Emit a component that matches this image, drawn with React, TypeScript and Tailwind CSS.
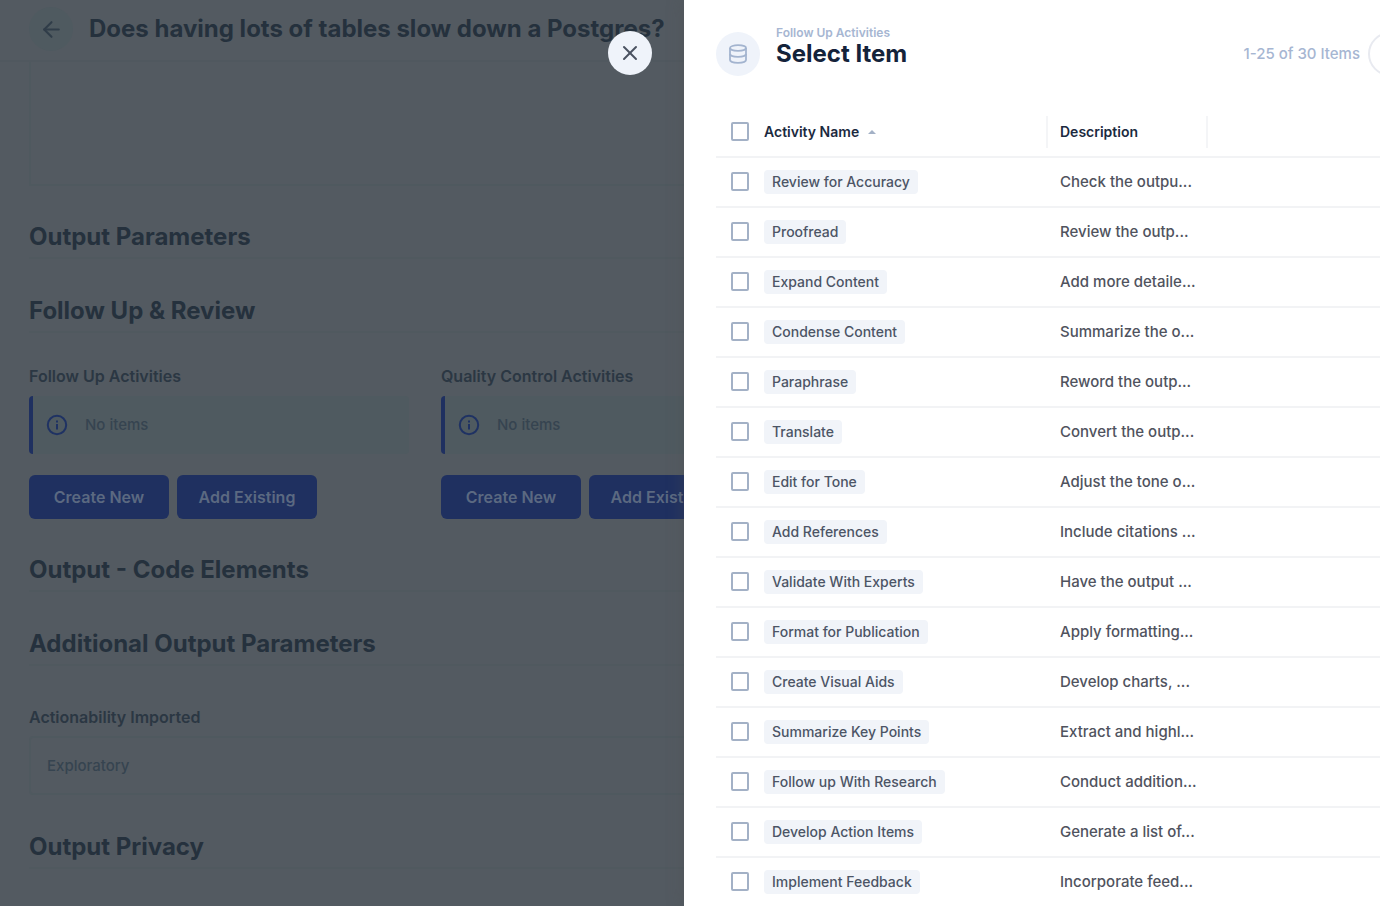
import { ArrowLeft, X } from "lucide-react";
import type { ReactNode } from "react";

const rows: [string, string][] = [
  ["Review for Accuracy", "Check the outpu..."],
  ["Proofread", "Review the outp..."],
  ["Expand Content", "Add more detaile..."],
  ["Condense Content", "Summarize the o..."],
  ["Paraphrase", "Reword the outp..."],
  ["Translate", "Convert the outp..."],
  ["Edit for Tone", "Adjust the tone o..."],
  ["Add References", "Include citations ..."],
  ["Validate With Experts", "Have the output ..."],
  ["Format for Publication", "Apply formatting..."],
  ["Create Visual Aids", "Develop charts, ..."],
  ["Summarize Key Points", "Extract and highl..."],
  ["Follow up With Research", "Conduct addition..."],
  ["Develop Action Items", "Generate a list of..."],
  ["Implement Feedback", "Incorporate feed..."],
];

function DatabaseIcon() {
  return (
    <svg width="20" height="20" viewBox="0 0 20 20" fill="none" stroke="#a3b4cf" strokeWidth="1.8" aria-hidden="true">
      <ellipse cx="10" cy="4" rx="8" ry="2.8" />
      <path d="M2 4v12c0 1.6 3.6 2.8 8 2.8s8-1.2 8-2.8V4" />
      <path d="M2 10c0 1.6 3.6 2.8 8 2.8s8-1.2 8-2.8" />
    </svg>
  );
}

function InfoIcon() {
  return (
    <svg width="22" height="22" viewBox="0 0 22 22" fill="none" stroke="#1f3263" strokeWidth="2" aria-hidden="true">
      <circle cx="11" cy="11" r="9.2" />
      <path d="M11 10v5.4M11 6.4v2" />
    </svg>
  );
}

function SectionHeading({ children }: { children: ReactNode }) {
  return (
    <h2 className="border-b-2 border-[#50595f] pb-1 text-2xl leading-8 font-bold text-[#25313d]">{children}</h2>
  );
}

function ActivityField({ label }: { label: string }) {
  return (
    <section className="w-[380px] shrink-0">
      <h3 className="text-base leading-6 font-semibold text-[#2b3743]">{label}</h3>
      <div className="mt-2 flex h-[58px] items-center gap-[17px] rounded border-l-4 border-[#1f3060] bg-[#4f5a60] pl-[13px]">
        <InfoIcon />
        <p className="text-[15px] font-medium text-[#364450]">No items</p>
      </div>
      <div className="mt-[21px] flex gap-2">
        <button type="button" className="h-11 w-[140px] rounded-md bg-[#1f3060] text-base font-semibold text-[#5b6981]">
          Create New
        </button>
        <button type="button" className="h-11 w-[140px] rounded-md bg-[#1f3060] text-base font-semibold text-[#5b6981]">
          Add Existing
        </button>
      </div>
    </section>
  );
}

function Page() {
  return (
    <div className="h-full min-w-[1380px] overflow-hidden">
      <header className="flex h-[62px] items-center gap-4 border-b-2 border-[#50585f] pb-0.5 pl-[29px]">
        <button
          type="button"
          aria-label="Back"
          className="flex size-11 items-center justify-center rounded-full bg-[#4f5a60] text-[#303d49]"
        >
          <ArrowLeft size={25} strokeWidth={2} />
        </button>
        <h1 className="text-2xl leading-8 font-bold text-[#25313d]">Does having lots of tables slow down a Postgres?</h1>
      </header>
      <main className="flex flex-col gap-9 px-[29px]">
        <div className="-mb-px h-[124px] border-2 border-t-0 border-[#4f595f]" />
        <SectionHeading>Output Parameters</SectionHeading>
        <SectionHeading>Follow Up &amp; Review</SectionHeading>
        <div className="-mt-[5px] -mb-px flex gap-8">
          <ActivityField label="Follow Up Activities" />
          <ActivityField label="Quality Control Activities" />
        </div>
        <SectionHeading>Output - Code Elements</SectionHeading>
        <SectionHeading>Additional Output Parameters</SectionHeading>
        <div className="mt-[3px]">
          <label htmlFor="actionability" className="block text-base leading-6 font-semibold text-[#2b3743]">
            Actionability Imported
          </label>
          <input
            id="actionability"
            readOnly
            defaultValue="Exploratory"
            className="mt-[7px] block h-[59px] w-full rounded border-2 border-[#4f595f] px-4 text-[15px] font-medium text-[#364450]"
          />
        </div>
        <SectionHeading>Output Privacy</SectionHeading>
      </main>
    </div>
  );
}

function Tick({ label }: { label: string }) {
  return (
    <input
      type="checkbox"
      aria-label={label}
      className="block h-[19px] w-[18px] appearance-none rounded-[2px] border-2 border-[#a3b1c6] bg-white checked:bg-[#a3b1c6]"
    />
  );
}

function Drawer() {
  return (
    <aside className="absolute inset-y-0 right-0 flex w-[696px] flex-col bg-white pl-8 shadow-[0_0_16px_rgba(80,80,80,0.4)]">
      <button
        type="button"
        aria-label="Close"
        className="absolute top-[31px] -left-19 flex size-11 items-center justify-center rounded-full bg-[#eff3fa] text-[#4a5260]"
      >
        <X size={24} strokeWidth={2} />
      </button>
      <div className="flex h-[107px] shrink-0 items-center overflow-hidden">
        <div className="flex size-11 shrink-0 items-center justify-center rounded-full bg-[#eff3fa]">
          <DatabaseIcon />
        </div>
        <div className="ml-4 flex-1 pb-[15px]">
          <p className="text-xs leading-4 font-semibold text-[#a6b6d2]">Follow Up Activities</p>
          <h2 className="text-2xl leading-[26px] font-bold text-[#14233a]">Select Item</h2>
        </div>
        <p className="pt-0.5 text-[15px] font-medium text-[#a6b6d2]">1-25 of 30 Items</p>
        <button
          type="button"
          aria-label="Previous page"
          className="-mr-8 ml-2 size-11 shrink-0 rounded-full border-2 border-[#e8eaf0]"
        />
      </div>
      <div className="min-h-0 flex-1 overflow-hidden">
        <table className="w-full table-fixed border-collapse text-left">
          <colgroup>
            <col className="w-12" />
            <col className="w-[284px]" />
            <col className="w-[160px]" />
            <col />
          </colgroup>
          <thead>
            <tr className="h-[50px] border-b-2 border-[#f2f3f5]">
              <th className="pl-[15px]">
                <Tick label="Select all" />
              </th>
              <th className="text-sm font-semibold text-[#1b2a40]">
                <div className="flex h-8 items-center gap-[9px] border-r-2 border-[#f4f5f7]">
                  Activity Name
                  <svg width="8" height="4" viewBox="0 0 8 4" fill="#a3b1c6" aria-hidden="true">
                    <path d="M0 4 4 0l4 4z" />
                  </svg>
                </div>
              </th>
              <th className="text-sm font-semibold text-[#1b2a40]">
                <div className="flex h-8 items-center border-r-2 border-[#f4f5f7] pl-3">Description</div>
              </th>
              <th />
            </tr>
          </thead>
          <tbody>
            {rows.map(([name, description]) => (
              <tr key={name} className="h-[50px] border-b-2 border-[#f2f3f5]">
                <td className="pb-0.5 pl-[15px]">
                  <Tick label={name} />
                </td>
                <td className="pb-0.5">
                  <span className="inline-block rounded bg-[#f1f4f9] px-2 text-sm leading-6 font-medium text-[#4c5566]">
                    {name}
                  </span>
                </td>
                <td className="pl-3 text-[15px] font-medium whitespace-nowrap text-[#50535e]">{description}</td>
                <td />
              </tr>
            ))}
          </tbody>
        </table>
      </div>
    </aside>
  );
}

export default function App() {
  return (
    <div className="relative h-screen overflow-hidden bg-[#535a61] font-['Inter',sans-serif]">
      <Page />
      <Drawer />
    </div>
  );
}
